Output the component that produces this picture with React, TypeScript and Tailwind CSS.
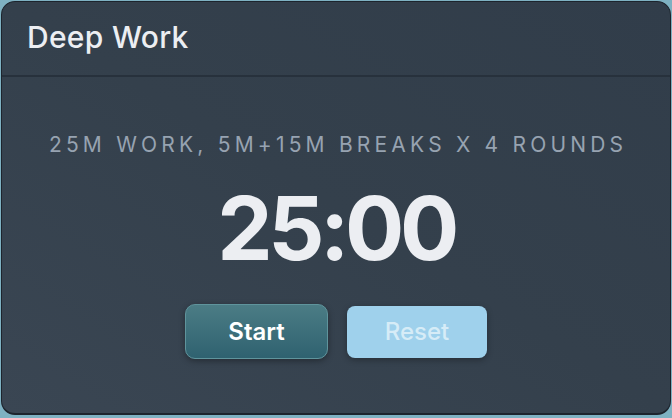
import React from "react";

export default function App() {
  return (
    <div className="w-[672px] h-[418px] bg-[#7eb1c2] p-px" style={{ fontFamily: "Inter, 'Noto Sans', sans-serif" }}>
      <div className="h-[414px] w-[670px] rounded-[14px] border border-[#1d242d] border-b-2 bg-gradient-to-tr from-[#3a4653] via-[#34404c] to-[#313d4a] flex flex-col overflow-hidden">
        <div className="h-[75px] flex items-center pl-[25px] pb-[2px] border-b-2 border-[#27313c]">
          <h1 className="text-[30px] font-medium text-[#eceef2] tracking-[0.01em]">Deep Work</h1>
        </div>
        <div className="flex flex-col items-center pt-[56px]">
          <p className="text-[21px] tracking-[0.2em] text-[#97a3b1] leading-[24px] pl-[0.2em]">25M WORK, 5M+15M BREAKS X 4 ROUNDS</p>
          <div className="mt-[21px] text-[88px] font-bold leading-[100px] text-[#eceef2] tracking-[-0.05em]">25:00</div>
          <div className="mt-[26px] flex items-start gap-[19px]">
            <button className="w-[143px] h-[55px] rounded-[10px] border border-[#5f949c] bg-gradient-to-b from-[#4b7c85] to-[#2f6270] text-white text-[24px] font-semibold shadow-[0_2px_6px_rgba(0,0,0,0.35)]">
              Start
            </button>
            <button className="mt-[2px] w-[140px] h-[52px] rounded-[8px] bg-[#9fd1ec] text-[#d6ecf7] text-[24px] font-medium shadow-[0_2px_6px_rgba(0,0,0,0.3)]">
              Reset
            </button>
          </div>
        </div>
      </div>
    </div>
  );
}
